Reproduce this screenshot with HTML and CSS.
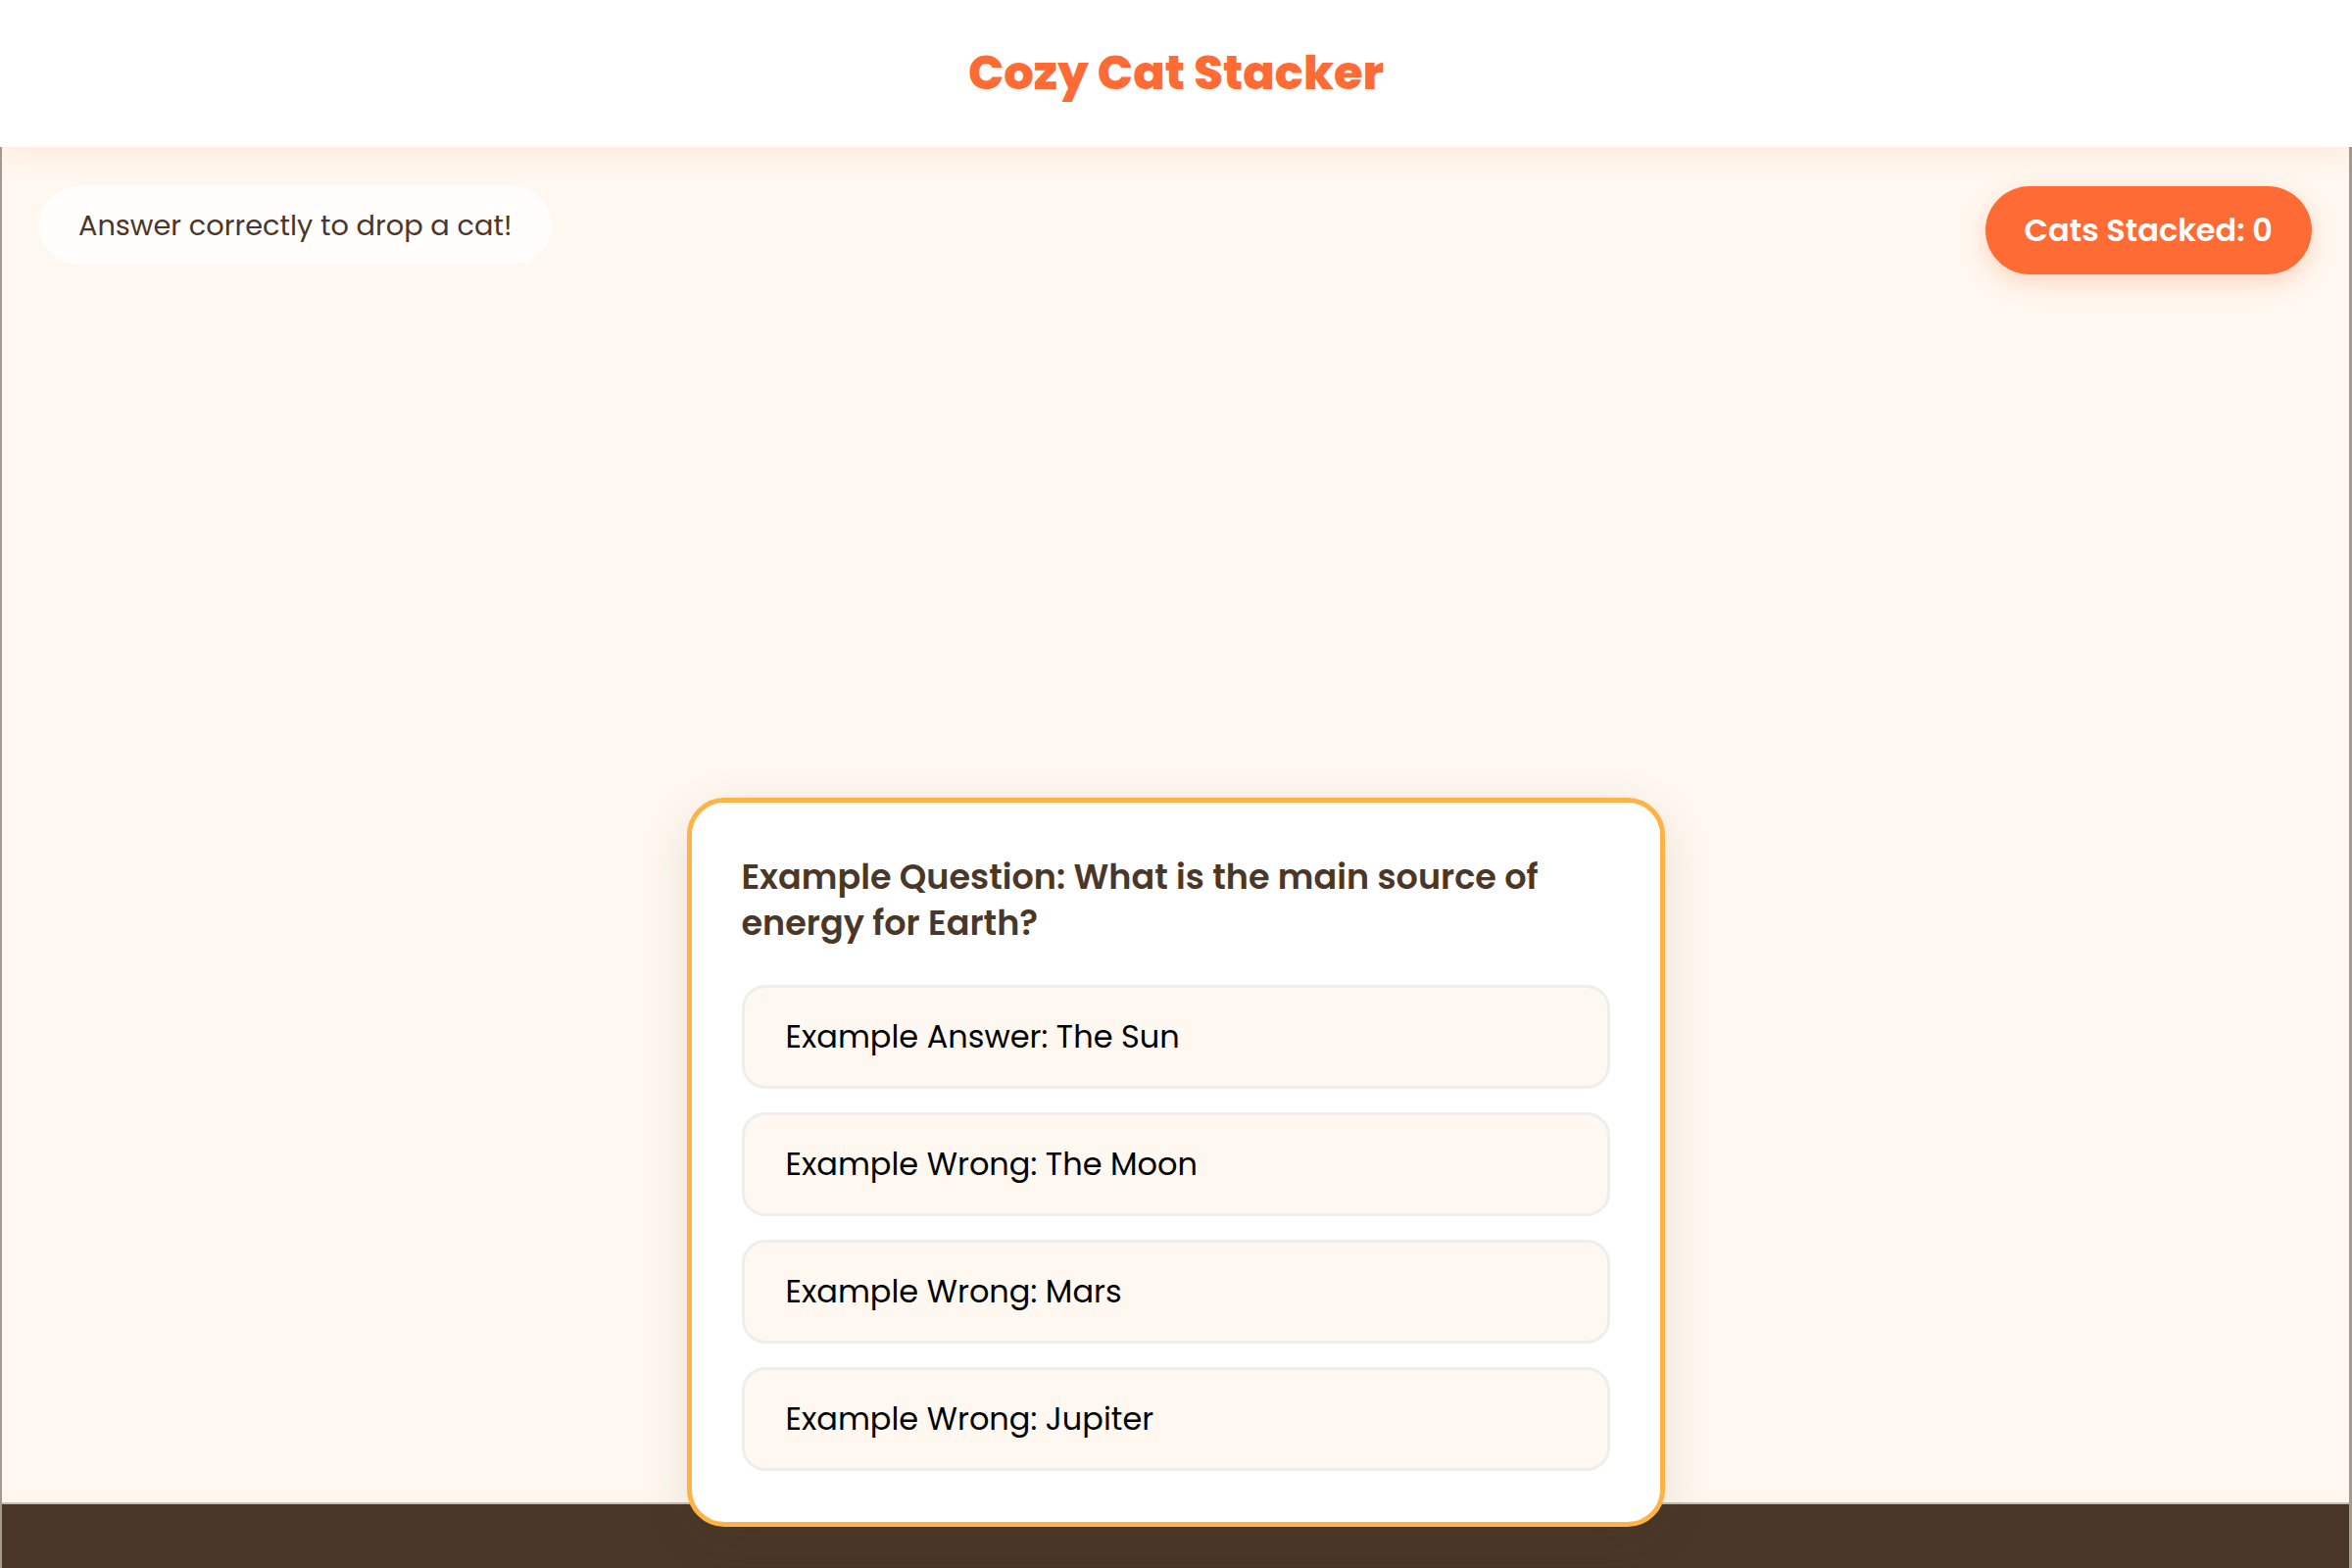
FILE: index.html
```html
<!DOCTYPE html>
<html lang="en">
  <head>
    <meta charset="UTF-8" />
    <meta name="viewport" content="width=device-width, initial-scale=1.0" />
    <title>Cozy Cat Stacker</title>
    <link rel="stylesheet" href="styles.css">
  </head>
  <body>
    <header class="top-bar">
      <h1 class="game-title">Cozy Cat Stacker</h1>
    </header>

    <main id="game" class="game-area">
      <div class="hud">
        <div id="status" class="status-pill">Answer correctly to drop a cat!</div>
        <div id="score" class="score-badge">Cats Stacked: 0</div>
      </div>
      <div class="stack-zone"></div>
      <div class="ground"></div>

      <div id="quiz" class="quiz-card">
        <p id="question" class="quiz-question">
          Example Question: What is the main source of energy for Earth?
        </p>
        <div class="quiz-answers">
          <button class="answer-btn">Example Answer: The Sun</button>
          <button class="answer-btn">Example Wrong: The Moon</button>
          <button class="answer-btn">Example Wrong: Mars</button>
          <button class="answer-btn">Example Wrong: Jupiter</button>
        </div>
      </div>
    </main>
  </body>
</html>
```

FILE: styles.css
```css
/* Reset */
* {
  margin: 0;
  padding: 0;
  box-sizing: border-box;
}

body {
  font-family: Poppins, "Open Sans", "Noto Sans", sans-serif;
  background: #fff8f0;
  color: #4a3728;
  display: flex;
  flex-direction: column;
  height: 100vh;
  overflow: hidden;
}

.top-bar {
  height: 150px;
  flex-shrink: 0;
  background: #ffffff;
  display: flex;
  align-items: center;
  justify-content: center;
  box-shadow: 0 6px 30px rgba(255, 107, 53, 0.12);
  position: relative;
  z-index: 2;
}

.game-title {
  font-size: 48px;
  font-weight: 800;
  color: #ff6b35;
}

.game-area {
  flex: 1;
  position: relative;
  display: flex;
  flex-direction: column;
  background: #fff8f0;
  border-left: 2px solid #a39a91;
  border-right: 3px solid #a39a91;
}

.hud {
  display: flex;
  justify-content: space-between;
  align-items: flex-start;
  padding: 40px 38px 0 38px;
}

.status-pill {
  height: 80px;
  display: flex;
  align-items: center;
  padding: 0 40px;
  background: rgba(255, 255, 255, 0.8);
  border-radius: 40px;
  font-size: 28.8px;
  color: #4a3728;
}

.score-badge {
  height: 90px;
  display: flex;
  align-items: center;
  padding: 0 40px;
  background: #ff6b35;
  color: #ffffff;
  border-radius: 45px;
  font-size: 32px;
  font-weight: 600;
  box-shadow: 0 8px 24px rgba(255, 107, 53, 0.25);
}

.stack-zone {
  flex: 1;
}

.ground {
  height: 67px;
  background: #4a3728;
  border-top: 2px solid #c9bdb1;
}

.quiz-card {
  position: absolute;
  left: 50%;
  bottom: 42px;
  transform: translateX(-50%);
  width: 998px;
  padding: 52px 51px 52px;
  background: #ffffff;
  border: 5px solid #ffb347;
  border-radius: 38px;
  box-shadow: 0 14px 50px rgba(74, 55, 40, 0.12);
  z-index: 3;
}

.quiz-question {
  font-size: 35px;
  font-weight: 600;
  line-height: 47px;
  color: #4a3728;
  margin-bottom: 40px;
}

.quiz-answers {
  display: flex;
  flex-direction: column;
  gap: 24px;
}

.answer-btn {
  height: 106px;
  width: 100%;
  text-align: left;
  padding: 0 42px;
  font-family: inherit;
  font-size: 32px;
  color: #000000;
  background: #fff8f0;
  border: 3px solid #eeeeee;
  border-radius: 24px;
  cursor: pointer;
  transition: all 0.2s ease;
}

.answer-btn:hover {
  border-color: #ffb347;
  transform: translateY(-2px);
}
```
